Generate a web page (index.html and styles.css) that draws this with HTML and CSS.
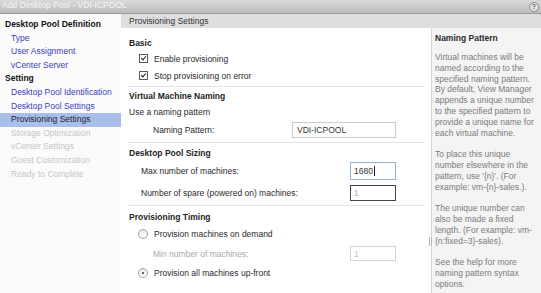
FILE: index.html
```html
<!DOCTYPE html>
<html lang="en">
<head>
    <meta charset="UTF-8">
    <title>Add Desktop Pool - VDI-ICPOOL</title>
    <link rel="stylesheet" href="styles.css">
</head>
<body>
    <div class="titlebar">
        <span class="title">Add Desktop Pool - VDI-ICPOOL</span>
        <span class="help-icon">?</span>
    </div>

    <div class="main">
        <ul class="steps">
            <li class="group">Desktop Pool Definition</li>
            <li>Type</li>
            <li>User Assignment</li>
            <li>vCenter Server</li>
            <li class="group">Setting</li>
            <li>Desktop Pool Identification</li>
            <li>Desktop Pool Settings</li>
            <li class="current">Provisioning Settings</li>
            <li class="disabled">Storage Optimization</li>
            <li class="disabled">vCenter Settings</li>
            <li class="disabled">Guest Customization</li>
            <li class="disabled">Ready to Complete</li>
        </ul>

        <div class="page">
            <div class="page-header">Provisioning Settings</div>
            <div class="page-body">
                <div class="form">
                    <div class="section basic">
                        <h3>Basic</h3>
                        <div class="check-row"><span class="checkbox"></span>Enable provisioning</div>
                        <div class="check-row"><span class="checkbox"></span>Stop provisioning on error</div>
                    </div>

                    <div class="section naming">
                        <h3>Virtual Machine Naming</h3>
                        <div class="text-row">Use a naming pattern</div>
                        <div class="field-row indent">
                            <span class="label">Naming Pattern:</span>
                            <span class="field wide">VDI-ICPOOL</span>
                        </div>
                    </div>

                    <div class="section sizing">
                        <h3>Desktop Pool Sizing</h3>
                        <div class="field-row max-row">
                            <span class="label">Max number of machines:</span>
                            <span class="field small active">1680<span class="caret"></span></span>
                        </div>
                        <div class="field-row spare-row">
                            <span class="label">Number of spare (powered on) machines:</span>
                            <span class="field small dark">1</span>
                        </div>
                    </div>

                    <div class="section timing">
                        <h3>Provisioning Timing</h3>
                        <div class="radio-row first"><span class="radio"></span>Provision machines on demand</div>
                        <div class="field-row indent min-row">
                            <span class="label muted">Min number of machines:</span>
                            <span class="field small disabled">1</span>
                        </div>
                        <div class="radio-row"><span class="radio on"></span>Provision all machines up-front</div>
                    </div>
                </div>

                <aside class="help">
                    <span class="grip"></span>
                    <h4>Naming Pattern</h4>
                    <p>Virtual machines will be<br>named according to the<br>specified naming pattern.<br>By default, View Manager<br>appends a unique number<br>to the specified pattern to<br>provide a unique name for<br>each virtual machine.</p>
                    <p>To place this unique<br>number elsewhere in the<br>pattern, use '{n}'. (For<br>example: vm-{n}-sales.).</p>
                    <p>The unique number can<br>also be made a fixed<br>length. (For example: vm-<br>{n:fixed=3}-sales).</p>
                    <p>See the help for more<br>naming pattern syntax<br>options.</p>
                </aside>
            </div>
        </div>
    </div>
</body>
</html>
```

FILE: styles.css
```css
body {
    margin: 0;
    width: 541px;
    height: 293px;
    overflow: hidden;
    background: #fff;
    color: #222;
    font-family: "Liberation Sans", Arial, sans-serif;
    font-size: 8.5px;
}

/* ===== WINDOW TITLE ===== */
.titlebar {
    height: 13px;
    display: flex;
    justify-content: space-between;
    align-items: center;
    padding: 0 2px;
    background: linear-gradient(to bottom, #d9d9d9, #bcbcbc);
    border-bottom: 1px solid #9c9c9c;
}

.title {
    color: #f6f6f6;
    line-height: 10px;
    margin-top: -3px;
}

.help-icon {
    width: 8px;
    height: 8px;
    border: 1px solid #8c8c8c;
    border-radius: 50%;
    background: #e4e4e4;
    color: #666;
    font-size: 7px;
    line-height: 8px;
    text-align: center;
    font-weight: bold;
}

.main {
    display: flex;
    height: 279px;
}

/* ===== WIZARD STEPS ===== */
.steps {
    width: 121px;
    margin: 0;
    padding: 4px 0 0;
    list-style: none;
    background: #fbfbfb;
}

.steps li {
    height: 13.6px;
    line-height: 13.6px;
    padding-left: 11px;
    color: #3c3cc0;
    white-space: nowrap;
}

.steps .group {
    padding-left: 5px;
    font-weight: bold;
    color: #111;
}

.steps .current {
    background: #a8bfe9;
    color: #1d1d3a;
}

.steps .disabled {
    color: #c6c6c6;
}

/* ===== PAGE ===== */
.page {
    flex: 1;
    display: flex;
    flex-direction: column;
}

.page-header {
    height: 14px;
    line-height: 14px;
    padding-left: 8px;
    background: #dedede;
    color: #333;
}

.page-body {
    flex: 1;
    display: flex;
}

.form {
    flex: 1;
    padding: 0 6px 0 7px;
}

.section {
    border-bottom: 1px solid #e3e3e3;
}

.section:last-child {
    border-bottom: 0;
}

.section h3 {
    margin: 0;
    height: 14px;
    line-height: 14px;
    font-size: 8.5px;
    font-weight: bold;
    color: #1e1e1e;
    padding-left: 1px;
}

.basic {
    padding: 8px 0 2px;
}

.naming {
    padding: 2px 0 3px;
}

.sizing {
    padding: 3px 0 1px;
}

.timing {
    padding: 4px 0 0;
}

.check-row,
.radio-row {
    display: flex;
    align-items: center;
    height: 17px;
    color: #2a2a2a;
}

.check-row {
    padding-left: 11px;
}

.radio-row {
    height: 18px;
    padding-left: 10px;
}

.radio-row.first {
    height: 19px;
}

.text-row {
    height: 18px;
    line-height: 18px;
    padding-left: 1px;
    color: #2a2a2a;
}

.field-row {
    display: flex;
    align-items: center;
    height: 18px;
    padding: 0 29px 0 13px;
    color: #2a2a2a;
}

.field-row.indent {
    padding-left: 25px;
}

.max-row {
    height: 22px;
}

.spare-row {
    height: 22px;
}

.min-row {
    height: 21px;
}

.label {
    flex: 1;
}

.muted {
    color: #a9a9a9;
}

/* ===== CONTROLS ===== */
.checkbox {
    width: 9px;
    height: 9px;
    box-sizing: border-box;
    margin-right: 6px;
    border: 1px solid #5a5a5a;
    background: #fff;
    position: relative;
}

.checkbox::after {
    content: '';
    position: absolute;
    left: 2px;
    top: 0;
    width: 2px;
    height: 4px;
    border: solid #222;
    border-width: 0 1.5px 1.5px 0;
    transform: rotate(40deg);
}

.radio {
    width: 10px;
    height: 10px;
    box-sizing: border-box;
    margin-right: 6px;
    border: 1px solid #a4a4a4;
    border-radius: 50%;
    background: linear-gradient(to bottom, #e9e9e9, #fff);
    position: relative;
}

.radio.on::after {
    content: '';
    position: absolute;
    left: 3px;
    top: 3px;
    width: 2px;
    height: 2px;
    border-radius: 50%;
    background: #333;
}

.field {
    box-sizing: border-box;
    height: 16px;
    line-height: 14px;
    padding-left: 3px;
    border: 1px solid #cbcbcb;
    background: #fff;
    color: #333;
    display: flex;
    align-items: center;
}

.field.wide {
    width: 104px;
    padding-left: 4px;
}

.field.small {
    width: 46px;
}

.field.active {
    height: 18px;
    border-color: #93b2d6;
}

.field.dark {
    border: 1px solid #444;
    color: #b0b0b0;
}

.field.disabled {
    height: 15px;
    border-color: #d2d2d2;
    color: #c2c2c2;
}

.caret {
    width: 1px;
    height: 10px;
    background: #222;
    margin-left: 1px;
}

/* ===== HELP PANEL ===== */
.help {
    width: 110px;
    box-sizing: border-box;
    padding: 5px 0 0 3px;
    border-left: 1px solid #d6d6d6;
    background: #f4f4f4;
    color: #7b7b7b;
    position: relative;
    white-space: nowrap;
}

.help h4 {
    margin: 0 0 8px;
    line-height: 11px;
    font-size: 8.5px;
    color: #2a2a2a;
}

.help p {
    margin: 0 0 10.8px;
    line-height: 10.8px;
}

.grip {
    position: absolute;
    left: -3px;
    top: 209px;
    width: 1px;
    height: 9px;
    border-left: 1px solid #b5b5b5;
    border-right: 1px solid #b5b5b5;
}
```
